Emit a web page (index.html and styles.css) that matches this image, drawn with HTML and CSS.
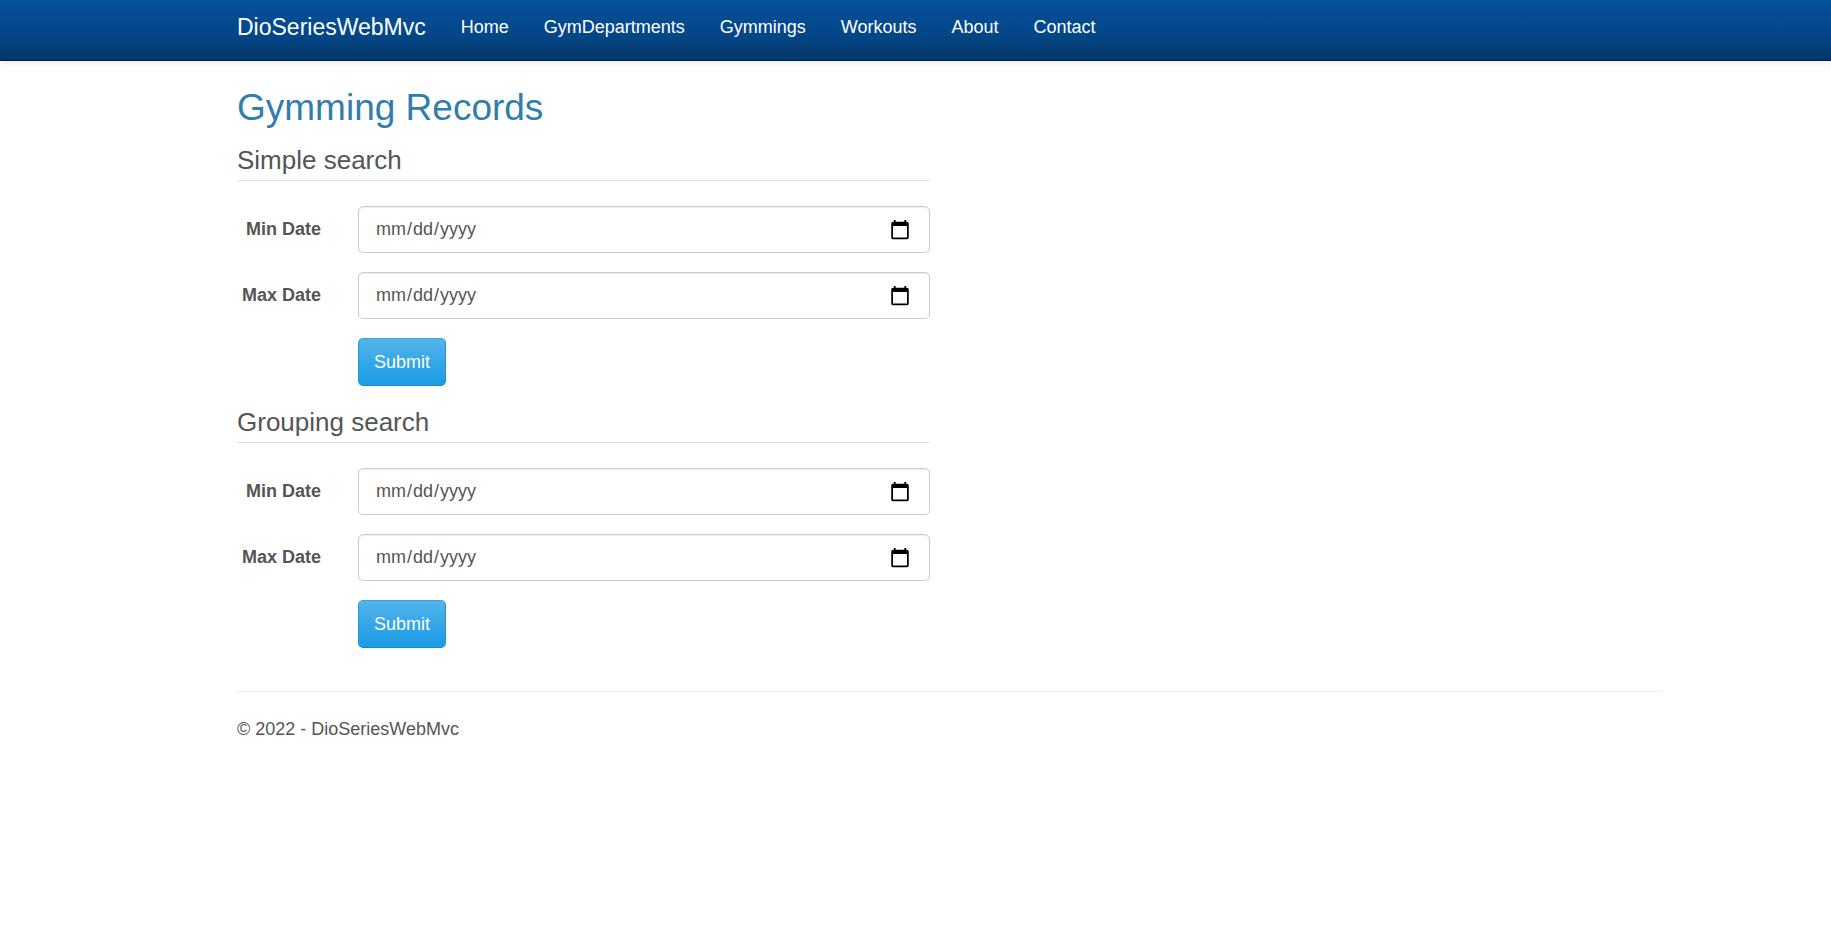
FILE: index.html
```html
<!DOCTYPE html>
<html lang="en-US">
<head>
<meta charset="utf-8">
<meta name="viewport" content="width=device-width, initial-scale=1">
<title>Gymming Records - DioSeriesWebMvc</title>
<link rel="stylesheet" href="styles.css">
</head>
<body>
<header class="navbar">
  <nav class="container nav">
    <a class="brand" href="#">DioSeriesWebMvc</a>
    <a class="nav-link" href="#">Home</a>
    <a class="nav-link" href="#">GymDepartments</a>
    <a class="nav-link" href="#">Gymmings</a>
    <a class="nav-link" href="#">Workouts</a>
    <a class="nav-link" href="#">About</a>
    <a class="nav-link" href="#">Contact</a>
  </nav>
</header>
<div class="container content">
  <main>
    <h2 class="title">Gymming Records</h2>
    <div class="row">
      <div class="searches">
        <form class="search">
          <h4 class="heading">Simple search</h4>
          <div class="fields">
            <label class="label" for="simple-min">Min Date</label>
            <input class="control" type="date" id="simple-min" name="minDate">
            <label class="label" for="simple-max">Max Date</label>
            <input class="control" type="date" id="simple-max" name="maxDate">
            <button class="submit" type="submit">Submit</button>
          </div>
        </form>
        <form class="search">
          <h4 class="heading">Grouping search</h4>
          <div class="fields">
            <label class="label" for="group-min">Min Date</label>
            <input class="control" type="date" id="group-min" name="minDate">
            <label class="label" for="group-max">Max Date</label>
            <input class="control" type="date" id="group-max" name="maxDate">
            <button class="submit" type="submit">Submit</button>
          </div>
        </form>
      </div>
    </div>
  </main>
  <footer class="footer">
    <p class="copyright">© 2022 - DioSeriesWebMvc</p>
  </footer>
</div>
</body>
</html>
```

FILE: styles.css
```css
*, *::before, *::after { box-sizing: border-box; }

body {
  margin: 0;
  background: #fff;
  color: #555;
  font-family: "Liberation Sans", Arial, sans-serif;
  font-size: 18px;
  line-height: 25px;
}

.container { padding: 0 169px 0 237px; }

.navbar {
  background: linear-gradient(#04519b, #044687 60%, #033769);
  border-bottom: 1px solid #022241;
  box-shadow: 0 1px 10px rgba(0, 0, 0, 0.1);
}

.nav {
  display: flex;
  flex-wrap: wrap;
  align-items: center;
  gap: 0 35px;
  min-height: 60px;
  padding-bottom: 5px;
}

.brand, .nav-link { color: #fff; text-decoration: none; }
.brand { font-size: 23px; }

.content { padding-top: 26px; }

.title {
  margin: 0 0 18px;
  color: #317eac;
  font-size: 37px;
  font-weight: 400;
  line-height: 41px;
}

.row {
  display: grid;
  grid-template-columns: 1fr 1fr;
  gap: 39px;
}

.searches { display: grid; gap: 22px; }

.heading {
  margin: 0 0 25px;
  padding-bottom: 5px;
  border-bottom: 1px solid #e2e2e2;
  font-size: 26px;
  font-weight: 400;
  line-height: 29px;
}

.fields {
  display: grid;
  grid-template-columns: 84px 1fr;
  gap: 19px 37px;
  align-items: center;
}

.label { font-weight: 700; text-align: right; white-space: nowrap; }

.control {
  width: 100%;
  height: 47px;
  padding: 10px 16px;
  border: 1px solid #ccc;
  border-radius: 5px;
  background: #fff;
  box-shadow: inset 0 1px 1px rgba(0, 0, 0, 0.075);
  color: #555;
  font: inherit;
}

.control::-webkit-calendar-picker-indicator {
  width: 22px;
  height: 22px;
}

.submit {
  grid-column: 2;
  justify-self: start;
  height: 48px;
  padding: 0 15px;
  border: 1px solid #1e97e0;
  border-top-color: #35a3e6;
  border-bottom-color: #178acc;
  border-radius: 5px;
  background: linear-gradient(#54b4eb, #2fa4e7 60%, #1d9ce5);
  color: #fff;
  font: inherit;
}

.footer {
  margin-top: 43px;
  border-top: 1px solid #eee;
}

.copyright { margin: 25px 0 12px; }

@media (max-width: 1200px) {
  .container { padding-right: 20px; padding-left: 20px; }
}

@media (max-width: 900px) {
  .row { grid-template-columns: 1fr; }
}
```
